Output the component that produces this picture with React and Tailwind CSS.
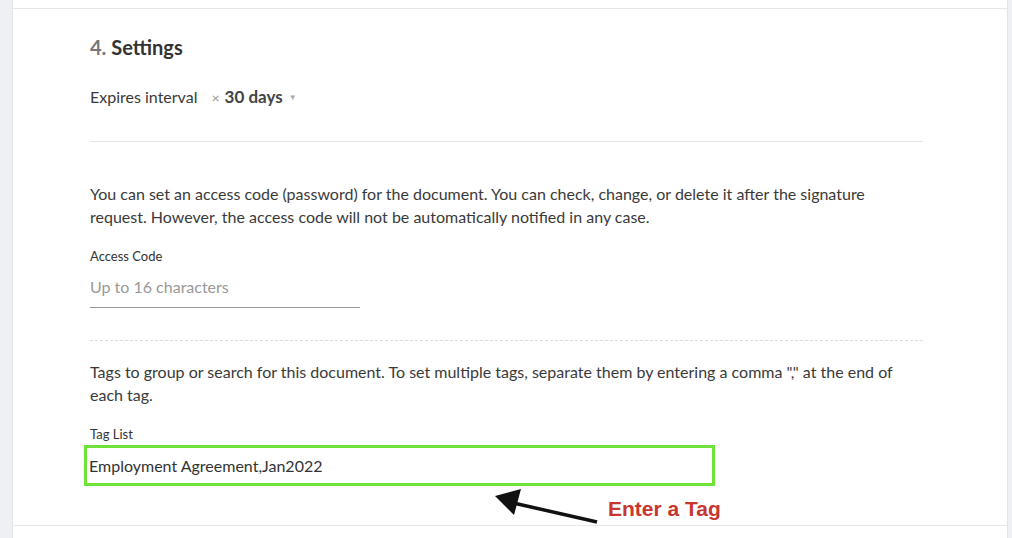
const Arrow = () => (
  <svg className="absolute left-[456px] top-[474px]" width="140" height="50" viewBox="0 0 140 50">
    <line x1="128" y1="39" x2="40" y2="19" stroke="#111" strokeWidth="3.5" />
    <polygon points="26,13 52,6 45,32" fill="#111" />
  </svg>
);

const App = () => {
  return (
    <div className="flex h-[538px] w-[1012px] overflow-hidden bg-white text-[#333] font-['Lato','Open_Sans',sans-serif]">
      <div className="w-[13px] bg-[#eef0f4] border-r border-[#e2e4e9]" />
      <div className="flex-1 pt-[8px]">
        <div className="relative border-t border-b border-[#e6e6e6] pl-[77px] pr-[84px] pt-[24px] pb-[39px]">
          <h2 className="text-[20px] leading-[28px] font-bold">
            <span className="text-[#777]">4. </span>Settings
          </h2>

          <div className="mt-[24px] flex items-center h-[24px] text-[16px]">
            <span className="text-[#3a3a3a]">Expires interval</span>
            <span className="ml-[14px] text-[14px] text-[#999]">×</span>
            <span className="ml-[5px] text-[17px] font-bold text-[#444]">30 days</span>
            <span className="ml-[6px] text-[8px] text-[#aaa]">▼</span>
          </div>

          <div className="mt-[32px] border-t border-[#e5e5e5]" />

          <p className="pt-[40px] text-[16px] leading-[23px] text-[#3a3a3a]">
            You can set an access code (password) for the document. You can check, change, or delete it after the signature request. However, the access code will not be automatically notified in any case.
          </p>

          <div className="mt-[19px] text-[13px] leading-[18px]">Access Code</div>
          <div className="mt-[2px] w-[270px] h-[41px] flex items-center border-b border-[#999] text-[16px] text-[#999]">
            Up to 16 characters
          </div>

          <div className="mt-[32px] border-t border-dashed border-[#ddd]" />

          <p className="pt-[19px] text-[16px] leading-[23px] text-[#3a3a3a]">
            Tags to group or search for this document. To set multiple tags, separate them by entering a comma "," at the end of each tag.
          </p>

          <div className="mt-[19px] text-[13px] leading-[18px]">Tag List</div>
          <div className="mt-[2px] -ml-[6px] w-[631px] h-[41px] flex items-center border-[3px] border-[#6fe23a] pl-[2px] text-[16px] text-[#333]">
            Employment Agreement,Jan2022
          </div>

          <Arrow />
          <div className="absolute left-[595px] top-[488px] text-[21px] font-bold leading-[24px] text-[#c8362f] font-['Liberation_Sans',Arial,sans-serif]">
            Enter a Tag
          </div>
        </div>
      </div>
      <div className="w-[5px] bg-[#eef0f4] border-l border-[#e2e4e9]" />
    </div>
  );
};

export default App;
